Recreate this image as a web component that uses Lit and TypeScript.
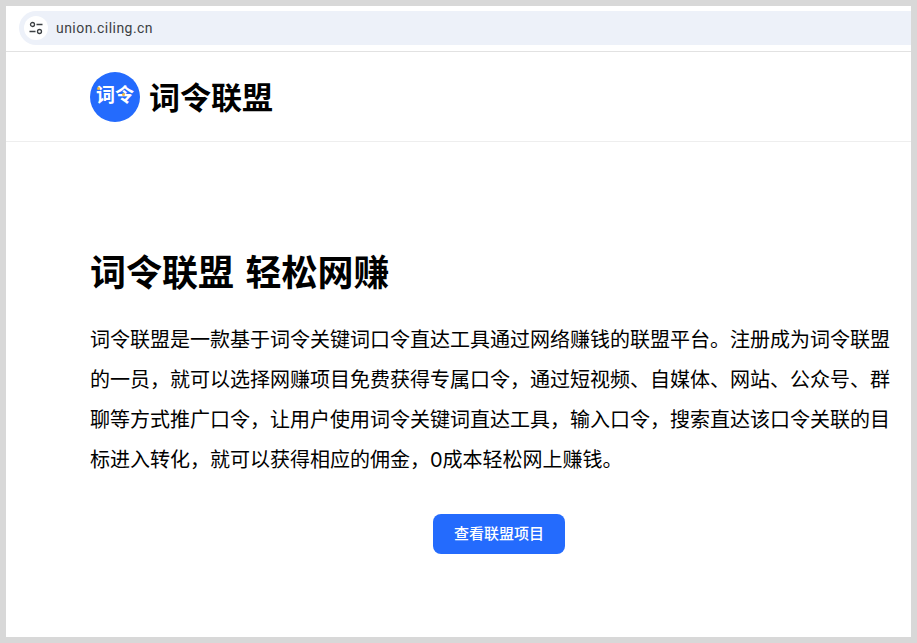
import { LitElement, html, css } from "lit";
import { customElement } from "lit/decorators.js";

@customElement("app-root")
export class AppRoot extends LitElement {
  static styles = css`
    :host {
      display: block;
      width: 917px;
      height: 643px;
      overflow: hidden;
      font-family: "Inter", "Noto Sans CJK SC", "Liberation Sans", sans-serif;
    }
    .frame {
      box-sizing: border-box;
      width: 917px;
      height: 643px;
      border: 6px solid #d8d8d8;
      background: #fff;
      display: flex;
      flex-direction: column;
    }
    .toolbar {
      box-sizing: border-box;
      height: 46px;
      flex: none;
      padding: 5px 0 6px 13px;
      border-bottom: 1px solid #e2e2e2;
    }
    .address {
      height: 34px;
      background: #edf1f9;
      border-radius: 17px 0 0 17px;
      display: flex;
      align-items: center;
      padding-left: 5px;
      gap: 8px;
    }
    .tune {
      width: 24px;
      height: 24px;
      border-radius: 50%;
      background: #fff;
      display: flex;
      align-items: center;
      justify-content: center;
    }
    .url {
      font-family: "Roboto", "Liberation Sans", sans-serif;
      font-size: 14px;
      letter-spacing: 0.46px;
      color: #3c4043;
    }
    .header {
      box-sizing: border-box;
      height: 90px;
      flex: none;
      border-bottom: 1px solid #eeeeee;
      display: flex;
      align-items: center;
      padding-left: 84px;
      gap: 9px;
    }
    .logo {
      position: relative;
      width: 50px;
      height: 50px;
      border-radius: 50%;
      background: #246bfd;
      color: #fff;
      font-size: 19px;
      font-weight: 700;
      line-height: 48px;
      text-align: center;
    }
    .dot {
      position: absolute;
      width: 3px;
      height: 3px;
      background: #f5b93a;
      border-radius: 50%;
    }
    .dot.a {
      left: 7px;
      top: 15px;
    }
    .dot.b {
      left: 32px;
      top: 21px;
    }
    .brand {
      font-size: 31px;
      font-weight: 700;
      color: #000;
      line-height: 40px;
      padding-top: 2px;
    }
    .main {
      flex: 1;
      padding: 103px 21px 0 84px;
      display: flex;
      flex-direction: column;
    }
    h1 {
      margin: 0;
      font-size: 36px;
      font-weight: 700;
      line-height: 56px;
      word-spacing: 3px;
      color: #000;
    }
    p {
      margin: 19px 0 0;
      width: 800px;
      font-size: 20px;
      line-height: 40px;
      color: #000;
    }
    .cta {
      align-self: flex-start;
      margin: 34px 0 0 343px;
      box-sizing: border-box;
      width: 132px;
      height: 40px;
      border: 0;
      padding: 0 0 3px;
      border-radius: 8px;
      background: #246bfd;
      color: #fff;
      font: 500 15px "Noto Sans CJK SC", sans-serif;
    }
  `;

  render() {
    return html`
      <div class="frame">
        <div class="toolbar">
          <div class="address">
            <span class="tune">
              <svg width="16" height="16" viewBox="0 0 16 16" fill="none" stroke="#3c4043" stroke-width="1.3">
                <circle cx="4.5" cy="4.5" r="2" />
                <path d="M8.5 4.5H14.5M1.5 11.5H7.5" />
                <circle cx="11.5" cy="11.5" r="2" />
              </svg>
            </span>
            <span class="url">union.ciling.cn</span>
          </div>
        </div>
        <header class="header">
          <div class="logo">词令<i class="dot a"></i><i class="dot b"></i></div>
          <div class="brand">词令联盟</div>
        </header>
        <main class="main">
          <h1>词令联盟 轻松网赚</h1>
          <p>词令联盟是一款基于词令关键词口令直达工具通过网络赚钱的联盟平台。注册成为词令联盟的一员，就可以选择网赚项目免费获得专属口令，通过短视频、自媒体、网站、公众号、群聊等方式推广口令，让用户使用词令关键词直达工具，输入口令，搜索直达该口令关联的目标进入转化，就可以获得相应的佣金，0成本轻松网上赚钱。</p>
          <button class="cta">查看联盟项目</button>
        </main>
      </div>
    `;
  }
}
